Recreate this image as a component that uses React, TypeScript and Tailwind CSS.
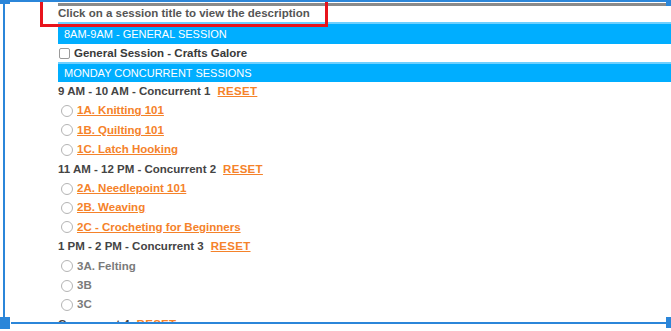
import React from "react";

type Option = { label: string; link: boolean };
type Slot = { title: string; options: Option[] };

const SLOTS: Slot[] = [
  {
    title: "9 AM - 10 AM - Concurrent 1",
    options: [
      { label: "1A. Knitting 101", link: true },
      { label: "1B. Quilting 101", link: true },
      { label: "1C. Latch Hooking", link: true },
    ],
  },
  {
    title: "11 AM - 12 PM - Concurrent 2",
    options: [
      { label: "2A. Needlepoint 101", link: true },
      { label: "2B. Weaving", link: true },
      { label: "2C - Crocheting for Beginners", link: true },
    ],
  },
  {
    title: "1 PM - 2 PM - Concurrent 3",
    options: [
      { label: "3A. Felting", link: false },
      { label: "3B", link: false },
      { label: "3C", link: false },
    ],
  },
  { title: "Concurrent 4", options: [] },
];

function Radio() {
  return <span className="inline-block w-[12px] h-[12px] rounded-full border border-[#b4b4b4] bg-white shrink-0" />;
}

function SlotBlock({ slot }: { slot: Slot }) {
  return (
    <>
      <div className="h-[19.4px] flex items-center text-[#444]">
        <span>{slot.title}</span>
        <a className="ml-[7px] text-[#f5822a] underline tracking-[0.3px] cursor-pointer">RESET</a>
      </div>
      {slot.options.map((o) => (
        <div key={o.label} className="h-[19.4px] flex items-center pl-[3px] gap-[4px]">
          <Radio />
          {o.link ? (
            <a className="text-[#f5822a] underline cursor-pointer">{o.label}</a>
          ) : (
            <span className="text-[#7a7a7a]">{o.label}</span>
          )}
        </div>
      ))}
    </>
  );
}

export default function App() {
  return (
    <div className="relative w-[671px] h-[331px] bg-white overflow-hidden" style={{ fontFamily: '"Liberation Sans", Arial, sans-serif' }}>
      <div className="h-[322px] overflow-hidden pl-[58px] pt-[3px] w-[720px] text-[11.5px] font-bold">
        <div className="border-t-[3px] border-[#8a8a8a]" />
        <div className="h-[16px] flex items-center text-[#555]">Click on a session title to view the description</div>
        <div className="h-[22px] bg-[#00aeff] border-t-2 border-[#6fd0ff] flex items-center pl-[6px] text-white font-normal text-[11px]">
          8AM-9AM - GENERAL SESSION
        </div>
        <div className="h-[18px] flex items-center gap-[4px] pl-[1px] pt-[1px] text-[#3a3a3a]">
          <span className="inline-block w-[11px] h-[11px] rounded-[2px] border border-[#9a9a9a] bg-white" />
          <span>General Session - Crafts Galore</span>
        </div>
        <div className="h-[20px] bg-[#00aeff] border-t-2 border-[#6fd0ff] flex items-center pl-[6px] text-white font-normal text-[11px]">
          MONDAY CONCURRENT SESSIONS
        </div>
        {SLOTS.map((s) => (
          <SlotBlock key={s.title} slot={s} />
        ))}
      </div>

      {/* highlight box */}
      <div className="absolute left-[40px] top-[-4px] w-[288px] h-[31px] border-[3px] border-[#e8141c]" />

      {/* selection frame */}
      <div className="absolute left-[10px] top-0 w-[656px] h-[2px] bg-[#2b86d9]" />
      <div className="absolute left-[3px] top-[4px] w-[2px] h-[313px] bg-[#2b86d9]" />
      <div className="absolute left-[11px] top-[322px] w-[655px] h-[2px] bg-[#2b86d9]" />
      <div className="absolute left-0 top-0 w-[10px] h-[4px] bg-[#2b86d9]" />
      <div className="absolute left-[666px] top-0 w-[5px] h-[6px] bg-[#2b86d9]" />
      <div className="absolute left-0 top-[317px] w-[10px] h-[12px] bg-[#2b86d9]" />
      <div className="absolute left-[666px] top-[317px] w-[5px] h-[11px] bg-[#2b86d9]" />
    </div>
  );
}
